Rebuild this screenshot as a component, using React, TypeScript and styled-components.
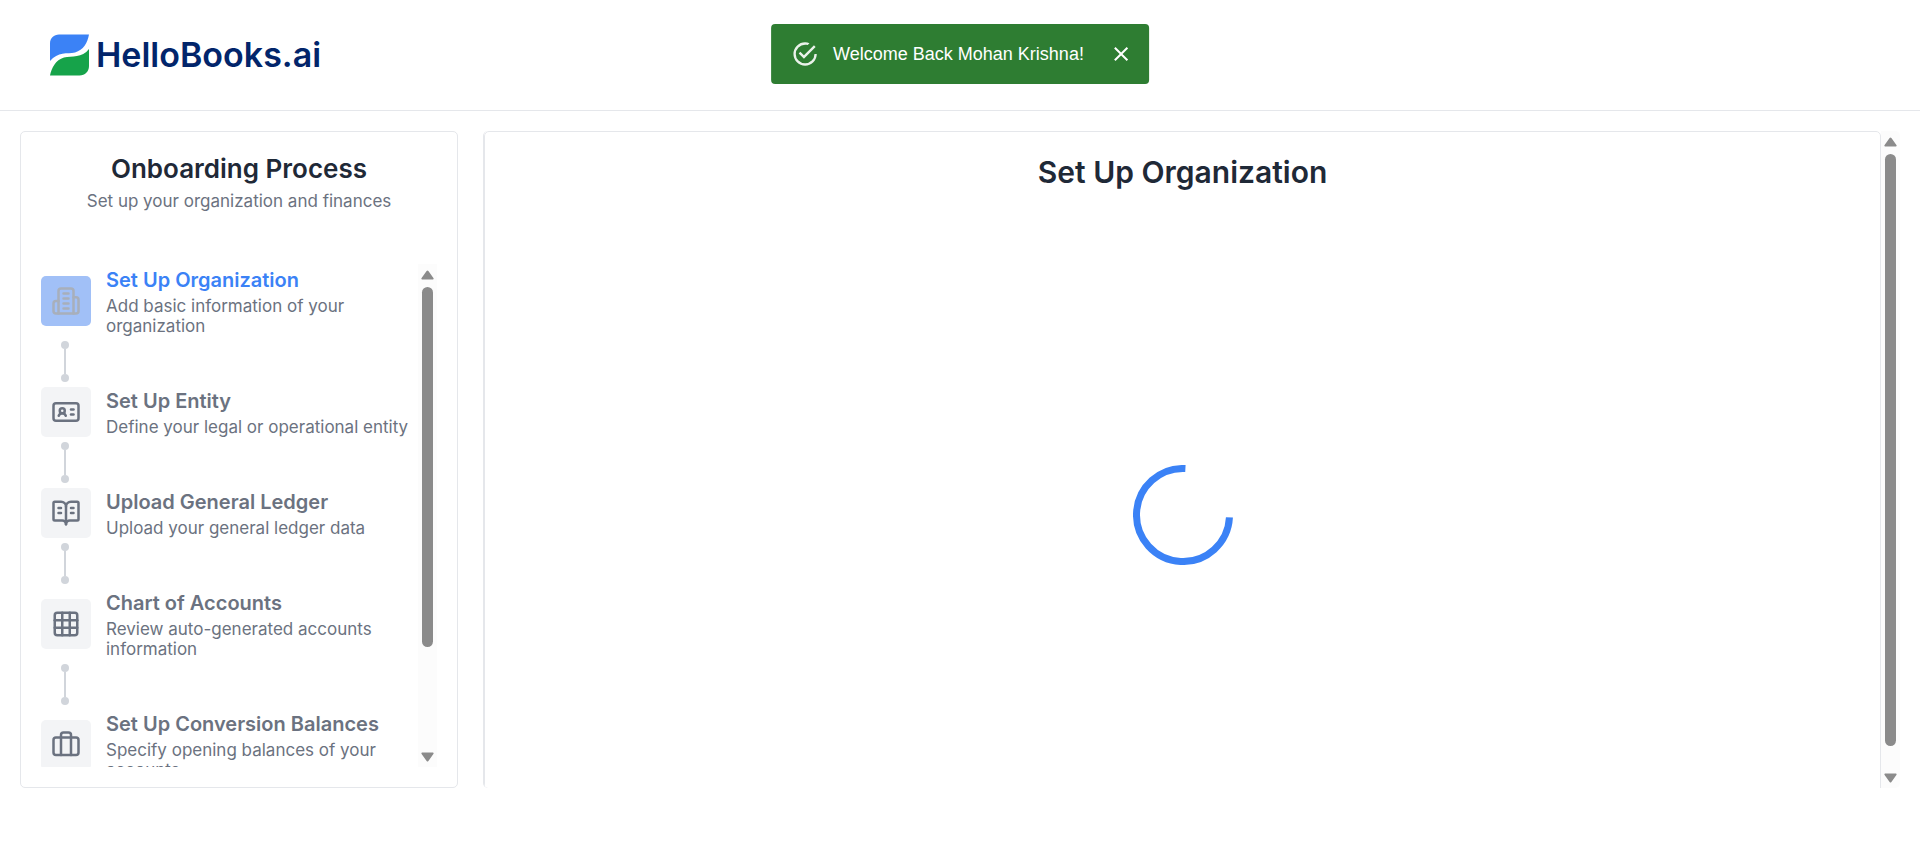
import React from 'react';
import styled, { createGlobalStyle } from 'styled-components';
import { BookOpenText, Briefcase, Grid3x3, IdCard } from 'lucide-react';

const GlobalStyle = createGlobalStyle`
  *, *::before, *::after { box-sizing: border-box; }
  body {
    margin: 0;
    background: #ffffff;
    color: #1f2937;
    font-family: Inter, "Liberation Sans", sans-serif;
    font-size: 16px;
    line-height: 20px;
  }
  h1, h2, h3, p, ol { margin: 0; padding: 0; }
`;

const Page = styled.div`
  display: flex;
  flex-direction: column;
  height: 100vh;
  min-height: 480px;
`;

const Header = styled.header`
  display: flex;
  align-items: center;
  flex: none;
  height: 111px;
  padding: 0 50px;
  border-bottom: 1px solid #e5e7eb;
`;

const Brand = styled.a`
  display: flex;
  align-items: center;
  gap: 7px;
  color: #02256b;
  font-family: Inter, sans-serif;
  font-size: 34px;
  font-weight: 600;
  line-height: 42px;
  text-decoration: none;
`;

const Toast = styled.div`
  position: fixed;
  top: 24px;
  left: 50%;
  transform: translateX(-50%);
  display: flex;
  align-items: center;
  height: 60px;
  padding: 0 16px 0 20px;
  border-radius: 4px;
  background: #2e7d32;
  color: #ffffff;
  font-family: "Liberation Sans", sans-serif;
  font-size: 18px;
  white-space: nowrap;
`;

const ToastText = styled.span`
  padding: 0 25px 0 14px;
`;

const CloseButton = styled.button`
  display: flex;
  padding: 0;
  border: 0;
  background: none;
  color: inherit;
  cursor: pointer;
`;

const Content = styled.main`
  display: flex;
  flex: 1;
  min-height: 0;
  gap: 25px;
  padding: 20px 20px 59px;
`;

const Sidebar = styled.aside`
  display: flex;
  flex-direction: column;
  flex: none;
  width: 438px;
  padding: 20px;
  border: 1px solid #e5e7eb;
  border-radius: 5px;
`;

const SidebarHeading = styled.div`
  display: flex;
  flex-direction: column;
  gap: 5px;
  padding-bottom: 53px;
  text-align: center;
`;

const SidebarTitle = styled.h1`
  font-size: 26px;
  font-weight: 600;
  line-height: 34px;
`;

const Muted = styled.p`
  color: #6b7280;
  font-size: 17px;
  line-height: 20px;
`;

const StepsArea = styled.div`
  display: flex;
  flex: 1;
  min-height: 0;
`;

const Steps = styled.ol`
  flex: 1;
  min-width: 0;
  padding-top: 2px;
  overflow-y: auto;
  scrollbar-width: none;
  list-style: none;
`;

const Step = styled.div`
  display: flex;
  align-items: center;
  gap: 15px;
`;

const StepIcon = styled.span<{ $active: boolean }>`
  display: flex;
  align-items: center;
  justify-content: center;
  flex: none;
  width: 50px;
  height: 50px;
  border-radius: 5px;
  background: ${({ $active }) => ($active ? '#a1c0f7' : '#f3f4f6')};
  color: ${({ $active }) => ($active ? '#a8afbb' : '#6b7280')};
`;

const StepTitle = styled.h3<{ $active: boolean }>`
  padding-bottom: 2px;
  color: ${({ $active }) => ($active ? '#3b82f6' : '#6b7280')};
  font-size: 20px;
  font-weight: 600;
  line-height: 28px;
`;

const Connector = styled.span`
  display: flex;
  flex-direction: column;
  align-items: center;
  width: 8px;
  height: 41px;
  margin: 5px 0 5px 20px;

  &::before,
  &::after {
    content: '';
    width: 8px;
    height: 8px;
    border-radius: 50%;
    background: #d1d5db;
  }
`;

const ConnectorLine = styled.span`
  flex: 1;
  width: 2px;
  background: #d1d5db;
`;

const Panel = styled.section`
  display: flex;
  flex: 1;
  min-width: 0;
  border-left: 1px solid #e5e7eb;
  border-radius: 5px;
  overflow: hidden;
`;

const PanelScroll = styled.div`
  flex: 1;
  min-width: 0;
  overflow-y: auto;
  scrollbar-width: none;
`;

const PanelCard = styled.div`
  display: flex;
  flex-direction: column;
  height: calc(100% + 20px);
  padding: 20px;
  border: 1px solid #e5e7eb;
  border-radius: 5px;
`;

const PanelTitle = styled.h2`
  font-size: 30px;
  font-weight: 600;
  line-height: 40px;
  text-align: center;
`;

const Loading = styled.div`
  display: flex;
  align-items: center;
  justify-content: center;
  flex: 1;
  padding-top: 50px;
`;

const Scrollbar = styled.div`
  display: flex;
  flex-direction: column;
  align-items: center;
  flex: none;
  width: 19px;
  padding: 6px 0 5px;
  background: #fcfcfc;
  color: #8b8b8b;
`;

const Rail = styled.div`
  display: flex;
  flex-direction: column;
  flex: 1;
  width: 11px;
  margin: 7px 0;
`;

const Thumb = styled.div<{ $visible: number; $hidden: number }>`
  height: calc(100% * ${({ $visible }) => $visible} / ${({ $visible, $hidden }) => $visible + $hidden});
  border-radius: 6px;
  background: #8b8b8b;
`;

function Arrow({ down = false }: { down?: boolean }) {
  return (
    <svg width="13" height="10" viewBox="0 0 13 10" fill="currentColor">
      <path
        d={
          down
            ? 'M1.2 0.5h10.6c.8 0 1.1.8.6 1.4L7.4 9q-.9 1.1-1.8 0L.6 1.9C.1 1.3.4.5 1.2.5z'
            : 'M1.2 9.5h10.6c.8 0 1.1-.8.6-1.4L7.4 1q-.9-1.1-1.8 0L.6 8.1c-.5.6-.2 1.4.6 1.4z'
        }
      />
    </svg>
  );
}

function ScrollTrack({ visible, hidden }: { visible: number; hidden: number }) {
  return (
    <Scrollbar aria-hidden="true">
      <Arrow />
      <Rail>
        <Thumb $visible={visible} $hidden={hidden} />
      </Rail>
      <Arrow down />
    </Scrollbar>
  );
}

function LogoMark() {
  return (
    <svg width="39" height="42" viewBox="0 0 39 42" aria-hidden="true">
      <path d="M9 .5H39C37.500 9 33.500 16 25 18.500C17 20 8 17.500 0 27V9.500C0 4 4 .5 9 .5Z" fill="#3b82f6" />
      <path d="M39 15V32C39 37.500 35 41.500 29.500 41.500H0C1.500 34 5.500 26 14 23.500C22 21.500 32 24.500 39 15Z" fill="#16a34a" />
    </svg>
  );
}

function OfficeIcon({ size }: { size: number }) {
  return (
    <svg
      width={size}
      height={size}
      viewBox="0 0 24 24"
      fill="none"
      stroke="currentColor"
      strokeWidth="2"
      strokeLinecap="round"
      strokeLinejoin="round"
      aria-hidden="true"
    >
      <path d="M6 22V4a2 2 0 0 1 2-2h8a2 2 0 0 1 2 2v18Z" />
      <path d="M6 12H4a2 2 0 0 0-2 2v6a2 2 0 0 0 2 2h2" />
      <path d="M18 9h2a2 2 0 0 1 2 2v9a2 2 0 0 1-2 2h-2" />
      <path d="M10 6h4M10 10h4M10 14h4M10 18h4" />
    </svg>
  );
}

interface StepData {
  title: string;
  text: string;
  icon: React.ComponentType<{ size: number }>;
}

const steps: StepData[] = [
  { title: 'Set Up Organization', text: 'Add basic information of your organization', icon: OfficeIcon },
  { title: 'Set Up Entity', text: 'Define your legal or operational entity', icon: IdCard },
  { title: 'Upload General Ledger', text: 'Upload your general ledger data', icon: BookOpenText },
  { title: 'Chart of Accounts', text: 'Review auto-generated accounts information', icon: Grid3x3 },
  { title: 'Set Up Conversion Balances', text: 'Specify opening balances of your accounts', icon: Briefcase },
];

export default function App() {
  return (
    <Page>
      <GlobalStyle />
      <Header>
        <Brand href="#">
          <LogoMark />
          HelloBooks.ai
        </Brand>
      </Header>

      <Toast role="alert">
        <svg width="28" height="28" viewBox="0 0 24 24" fill="currentColor" opacity="0.9" aria-hidden="true">
          <path d="M20,12A8,8 0 0,1 12,20A8,8 0 0,1 4,12A8,8 0 0,1 12,4C12.76,4 13.5,4.11 14.2,4.31L15.77,2.74C14.61,2.26 13.34,2 12,2A10,10 0 0,0 2,12A10,10 0 0,0 12,22A10,10 0 0,0 22,12M7.91,10.08L6.5,11.5L11,16L21,6L19.59,4.58L11,13.17L7.91,10.08Z" />
        </svg>
        <ToastText>Welcome Back Mohan Krishna!</ToastText>
        <CloseButton type="button" aria-label="Close">
          <svg width="24" height="24" viewBox="0 0 24 24" fill="currentColor">
            <path d="M19 6.41L17.59 5 12 10.59 6.41 5 5 6.41 10.59 12 5 17.59 6.41 19 12 13.41 17.59 19 19 17.59 13.41 12z" />
          </svg>
        </CloseButton>
      </Toast>

      <Content>
        <Sidebar>
          <SidebarHeading>
            <SidebarTitle>Onboarding Process</SidebarTitle>
            <Muted>Set up your organization and finances</Muted>
          </SidebarHeading>
          <StepsArea>
            <Steps>
              {steps.map(({ title, text, icon: Icon }, index) => (
                <li key={title}>
                  <Step>
                    <StepIcon $active={index === 0}>
                      <Icon size={30} />
                    </StepIcon>
                    <div>
                      <StepTitle $active={index === 0}>{title}</StepTitle>
                      <Muted>{text}</Muted>
                    </div>
                  </Step>
                  {index < steps.length - 1 && (
                    <Connector>
                      <ConnectorLine />
                    </Connector>
                  )}
                </li>
              ))}
            </Steps>
            <ScrollTrack visible={360} hidden={98} />
          </StepsArea>
        </Sidebar>

        <Panel>
          <PanelScroll>
            <PanelCard>
              <PanelTitle>Set Up Organization</PanelTitle>
              <Loading role="status" aria-label="Loading">
                <svg width="100" height="100" viewBox="0 0 100 100" fill="none">
                  <path d="M52.4 3.56A46.5 46.5 0 1 0 96.44 52.4" stroke="#3b82f6" strokeWidth="7" />
                </svg>
              </Loading>
            </PanelCard>
          </PanelScroll>
          <ScrollTrack visible={592} hidden={20} />
        </Panel>
      </Content>
    </Page>
  );
}
